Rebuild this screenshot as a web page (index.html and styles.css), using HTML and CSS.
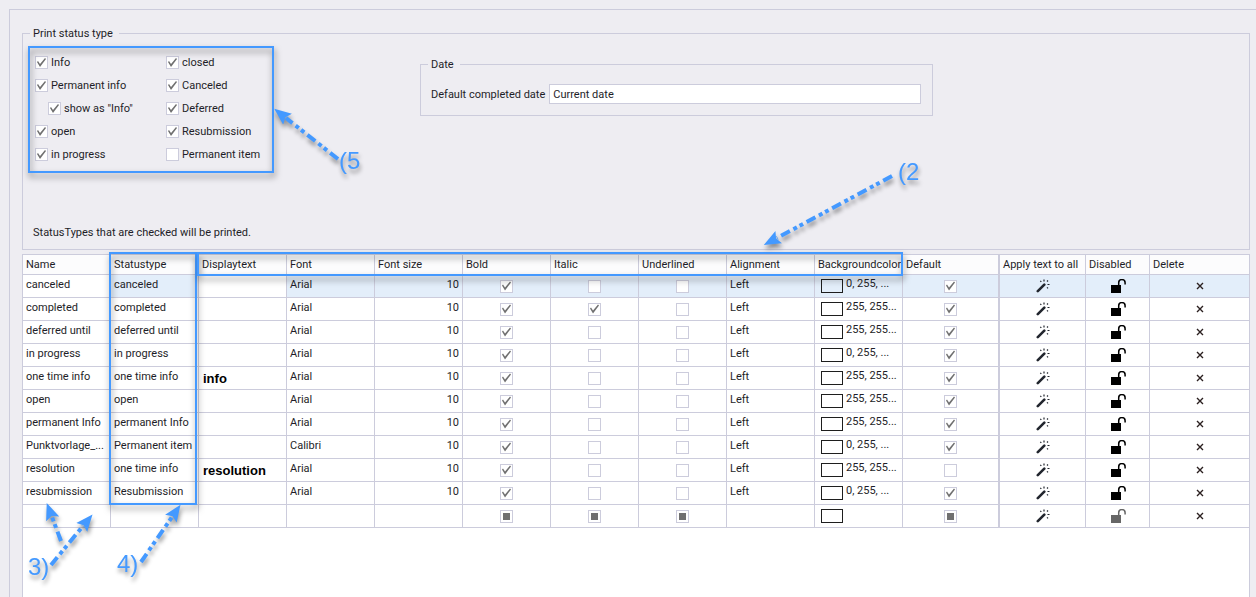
FILE: index.html
```
<!DOCTYPE html>
<html lang="en">

<head>
    <meta charset="UTF-8">
    <meta name="viewport" content="width=device-width, initial-scale=1.0">
    <title>Status types</title>
    <link rel="stylesheet" href="styles.css">
</head>

<body>
    <svg class="symbols" aria-hidden="true">
        <symbol id="icon-wand" viewBox="0 0 14 14">
            <path d="M1.8 12.2 L8.3 5.7" stroke="#22262e" stroke-width="2.6" stroke-linecap="round" />
            <path d="M8 0.5 V2.5 M4.3 1.8 L5.3 2.8 M12 1.5 L11 2.5 M11.5 5.5 H13.5 M11 8.3 L12 9.3" stroke="#22262e" stroke-width="1.2" />
        </symbol>
        <symbol id="icon-lock" viewBox="0 0 16 15">
            <rect x="1" y="6" width="10" height="8" fill="currentColor" />
            <path d="M8.7 6 V3.8 A3.2 3.2 0 0 1 15.1 3.8 V5.5" fill="none" stroke="currentColor" stroke-width="1.5" />
        </symbol>
        <symbol id="icon-delete" viewBox="0 0 8 8">
            <path d="M1 1 L7 7 M7 1 L1 7" stroke="#2b2020" stroke-width="1.4" />
        </symbol>
    </svg>

    <main class="panel">
        <fieldset class="group print-group">
            <legend>Print status type</legend>
            <div class="group-row">
                <div class="status-checks">
                    <label><input type="checkbox" checked>Info</label>
                    <label><input type="checkbox" checked>closed</label>
                    <label><input type="checkbox" checked>Permanent info</label>
                    <label><input type="checkbox" checked>Canceled</label>
                    <label class="sub"><input type="checkbox" checked>show as "Info"</label>
                    <label><input type="checkbox" checked>Deferred</label>
                    <label><input type="checkbox" checked>open</label>
                    <label><input type="checkbox" checked>Resubmission</label>
                    <label><input type="checkbox" checked>in progress</label>
                    <label><input type="checkbox">Permanent item</label>
                    <div class="mark mark-checks"></div>
                </div>
                <fieldset class="group date-group">
                    <legend>Date</legend>
                    <div class="date-row">
                        <label for="completed-date">Default completed date</label>
                        <input type="text" id="completed-date" value="Current date">
                    </div>
                </fieldset>
            </div>
            <p class="hint">StatusTypes that are checked will be printed.</p>
        </fieldset>

        <div class="grid">
            <table>
                <colgroup>
                    <col class="col-text" span="10">
                    <col class="col-default">
                    <col class="col-apply">
                    <col class="col-disabled">
                    <col>
                </colgroup>
                <thead>
                    <tr>
                        <th>Name</th>
                        <th>Statustype</th>
                        <th>Displaytext</th>
                        <th>Font</th>
                        <th>Font size</th>
                        <th>Bold</th>
                        <th>Italic</th>
                        <th>Underlined</th>
                        <th>Alignment</th>
                        <th>Backgroundcolor</th>
                        <th class="split">Default</th>
                        <th>Apply text to all</th>
                        <th>Disabled</th>
                        <th>Delete</th>
                    </tr>
                </thead>
                <tbody id="status-list"></tbody>
            </table>
            <div class="mark mark-column"></div>
            <div class="mark mark-header"></div>
        </div>
    </main>

    <svg class="notes" width="940" height="597">
        <defs>
            <marker id="arrow" markerUnits="userSpaceOnUse" markerWidth="18" markerHeight="16" refX="2" refY="8" orient="auto">
                <path d="M0 1 L17 8 L0 15 L3 8 Z" fill="#4499ff" />
            </marker>
        </defs>
        <g class="arrows">
            <path d="M338 159 L286 118" />
            <path d="M892 176 L777 238" />
            <path d="M61 541 L52 517" />
            <path d="M51 565 L83 526" />
            <path d="M141 562 L172 517" />
        </g>
        <text x="339" y="169">(5</text>
        <text x="898" y="180">(2</text>
        <text x="28" y="575">3)</text>
        <text x="117" y="572">4)</text>
    </svg>

    <script>
        const rows = [
            { name: 'canceled', type: 'canceled', text: '', font: 'Arial', italic: false, color: '0, 255, ...', def: true },
            { name: 'completed', type: 'completed', text: '', font: 'Arial', italic: true, color: '255, 255...', def: true },
            { name: 'deferred until', type: 'deferred until', text: '', font: 'Arial', italic: false, color: '255, 255...', def: true },
            { name: 'in progress', type: 'in progress', text: '', font: 'Arial', italic: false, color: '0, 255, ...', def: true },
            { name: 'one time info', type: 'one time info', text: 'info', font: 'Arial', italic: false, color: '255, 255...', def: true },
            { name: 'open', type: 'open', text: '', font: 'Arial', italic: false, color: '255, 255...', def: true },
            { name: 'permanent Info', type: 'permanent Info', text: '', font: 'Arial', italic: false, color: '255, 255...', def: true },
            { name: 'Punktvorlage_...', type: 'Permanent item', text: '', font: 'Calibri', italic: false, color: '0, 255, ...', def: true },
            { name: 'resolution', type: 'one time info', text: 'resolution', font: 'Arial', italic: false, color: '255, 255...', def: false },
            { name: 'resubmission', type: 'Resubmission', text: '', font: 'Arial', italic: false, color: '0, 255, ...', def: true }
        ];

        function check(label, on) {
            return `<input type="checkbox" aria-label="${label}"${on ? ' checked' : ''}>`;
        }

        function action(label, icon) {
            return `<button type="button" aria-label="${label}"><svg class="icon-${icon}"><use href="#icon-${icon}"/></svg></button>`;
        }

        function addRow(row, className) {
            const tr = document.createElement('tr');
            tr.className = className;
            tr.innerHTML = `
                <td class="name">${row.name}</td>
                <td>${row.type}</td>
                <td class="display">${row.text}</td>
                <td>${row.font}</td>
                <td class="number">${row.size}</td>
                <td class="center">${check('Bold', row.bold)}</td>
                <td class="center">${check('Italic', row.italic)}</td>
                <td class="center">${check('Underlined', false)}</td>
                <td>${row.align}</td>
                <td><div class="color"><span class="swatch"></span><span>${row.color}</span></div></td>
                <td class="center split">${check('Default', row.def)}</td>
                <td class="center">${action('Apply text to all', 'wand')}</td>
                <td class="center">${action('Disabled', 'lock')}</td>
                <td class="center">${action('Delete', 'delete')}</td>
            `;
            document.getElementById('status-list').appendChild(tr);
            return tr;
        }

        rows.forEach((row, index) => {
            addRow({ ...row, size: 10, bold: true, align: 'Left' }, index === 0 ? 'selected' : '');
        });

        // empty row for a new entry
        const newRow = addRow({ name: '', type: '', text: '', font: '', size: '', align: '', color: '' }, 'new-row');
        newRow.querySelectorAll('input').forEach(input => {
            input.indeterminate = true;
        });
    </script>
</body>

</html>
```
FILE: styles.css
```
* {
    box-sizing: border-box;
}

body {
    position: relative;
    display: flex;
    flex-direction: column;
    min-height: 100vh;
    margin: 0;
    padding: 9px 0 0 9px;
    background-color: #eeedf2;
    color: #1e1e28;
    font-family: Tahoma, Roboto, sans-serif;
    font-size: 11px;
    line-height: 15px;
}

.symbols {
    position: absolute;
    width: 0;
    height: 0;
}

.panel {
    flex: 1;
    display: flex;
    flex-direction: column;
    padding: 16px 6px 0 12px;
    border-top: 1px solid #ccccdc;
    border-left: 1px solid #ccccdc;
}

.group {
    margin: 0;
    border: 1px solid #ccccdc;
}

.group legend {
    margin-left: 2px;
    padding: 0 6px 0 3px;
}

.print-group {
    padding: 5px 5px 9px;
}

.group-row {
    display: flex;
    align-items: flex-start;
    gap: 146px;
}

.status-checks {
    position: relative;
    display: grid;
    grid-template-columns: 131px 1fr;
    grid-auto-rows: 23px;
    width: 246px;
    padding: 5px 0 7px 7px;
}

.status-checks label {
    display: flex;
    align-items: center;
    gap: 3px;
}

.status-checks .sub {
    padding-left: 13px;
}

input[type="checkbox"] {
    appearance: none;
    display: block;
    position: relative;
    width: 13px;
    height: 13px;
    margin: 0;
    border: 1px solid #ccccdc;
    background-color: white;
}

input[type="checkbox"]:checked::after {
    content: "";
    position: absolute;
    inset: 0;
    background-color: #707070;
    clip-path: polygon(1px 5px, 2px 4px, 4px 7px, 9px 1px, 10px 2px, 4px 10px);
}

input[type="checkbox"]:indeterminate::after {
    content: "";
    position: absolute;
    inset: 2px;
    background-color: #707070;
}

.date-group {
    flex: 0 1 513px;
    margin-top: 11px;
    padding: 12px 11px 11px 5px;
}

.date-row {
    display: flex;
    align-items: center;
    gap: 4px;
    padding-left: 5px;
}

.date-row input {
    flex: 1;
    min-width: 0;
    height: 20px;
    padding: 0 3px;
    border: 1px solid #ccccdc;
    background-color: white;
    color: inherit;
    font: inherit;
}

.hint {
    margin: 52px 0 0 5px;
}

.grid {
    position: relative;
    flex: 1;
    margin-top: 4px;
    border: 1px solid #ccccdc;
    border-bottom: none;
    background-color: white;
}

table {
    width: 100%;
    table-layout: fixed;
    border-spacing: 0;
}

.col-text {
    width: 88px;
}

.col-default {
    width: 97px;
}

.col-apply {
    width: 86px;
}

.col-disabled {
    width: 64px;
}

th,
td {
    padding: 0 3px;
    border-right: 1px solid #ccccdc;
    border-bottom: 1px solid #ccccdc;
    text-align: left;
    white-space: nowrap;
}

th:last-child,
td:last-child {
    border-right: none;
}

th {
    height: 20px;
    background-color: #fcfcfd;
    font-weight: normal;
}

td {
    height: 23px;
    padding-bottom: 3px;
}

th.split,
td.split {
    border-right-width: 2px;
}

.selected td {
    background-color: #e3eefa;
}

.selected .name,
.selected .display {
    background-color: white;
}

.display {
    padding: 0 4px;
    color: black;
    font-family: Arial, "Liberation Sans", sans-serif;
    font-size: 13px;
    font-weight: bold;
}

.number {
    text-align: right;
}

.center {
    padding: 0;
}

.center input,
.center button {
    margin: 0 auto;
}

.color {
    display: flex;
    gap: 3px;
    padding-left: 3px;
}

.swatch {
    flex: none;
    width: 22px;
    height: 14px;
    margin-top: 3px;
    border: 1px solid #1e1e1e;
}

td button {
    display: flex;
    align-items: center;
    justify-content: center;
    height: 20px;
    padding: 0;
    border: none;
    background: none;
    color: black;
}

.icon-wand {
    width: 14px;
    height: 14px;
}

.icon-lock {
    width: 16px;
    height: 15px;
}

.icon-delete {
    width: 8px;
    height: 8px;
}

.new-row .icon-lock {
    color: #666666;
}

.mark {
    position: absolute;
    border: 2px solid #4499ff;
    filter: drop-shadow(1px 4px 3px rgba(0, 0, 0, 0.5));
    pointer-events: none;
}

.mark-checks {
    inset: 0;
}

.mark-column {
    top: -3px;
    left: 86px;
    width: 88px;
    height: 253px;
}

.mark-header {
    top: -3px;
    left: 174px;
    width: 706px;
    height: 24px;
}

.notes {
    position: absolute;
    top: 0;
    left: 0;
    filter: drop-shadow(1px 4px 2px rgba(0, 0, 0, 0.4));
    pointer-events: none;
}

.notes text {
    fill: #4499ff;
    font-family: Arial, "Liberation Sans", sans-serif;
    font-size: 24px;
}

.arrows path {
    fill: none;
    stroke: #4499ff;
    stroke-width: 4;
    stroke-dasharray: 10 4 4 3 4 4;
    marker-end: url(#arrow);
}
```
